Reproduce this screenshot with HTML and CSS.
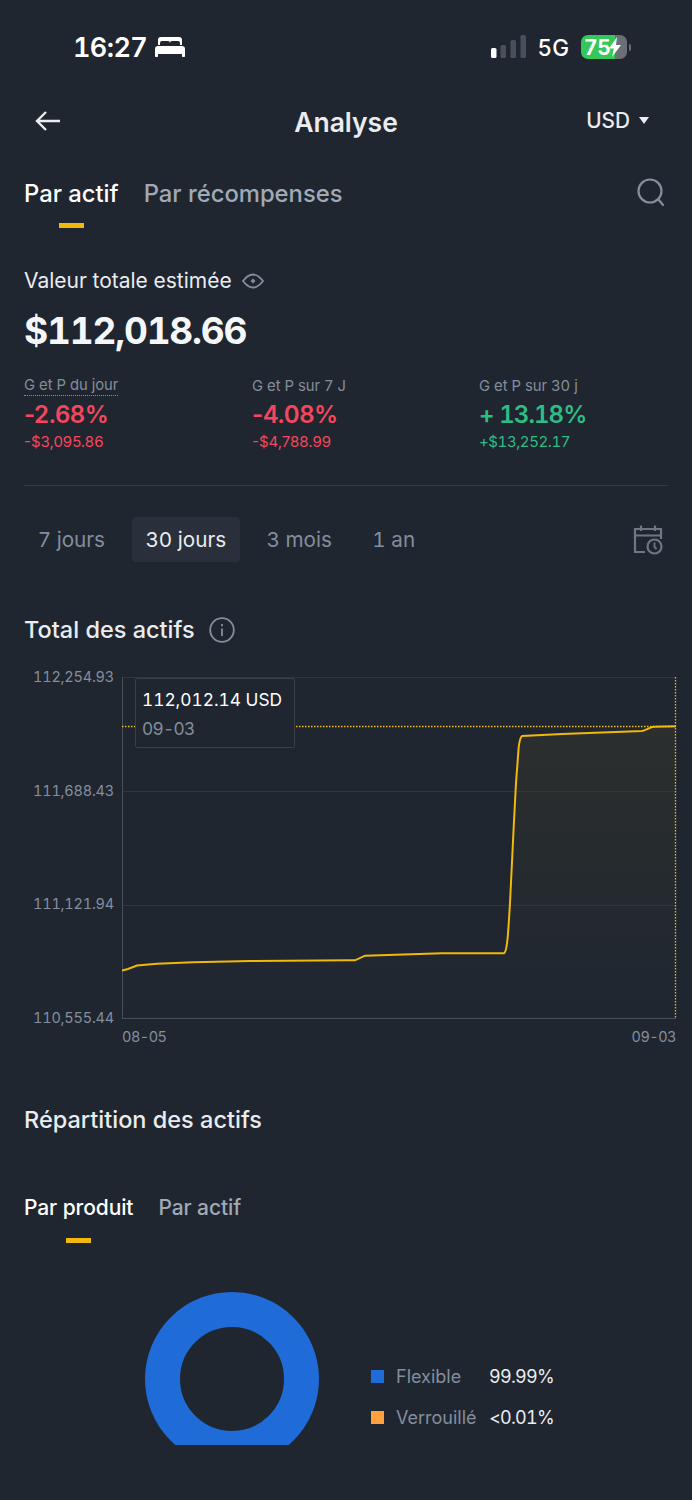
FILE: index.html
```html
<!DOCTYPE html>
<html lang="fr">
<head>
    <meta charset="UTF-8">
    <meta name="viewport" content="width=device-width, initial-scale=1.0">
    <title>Analyse</title>
    <link rel="stylesheet" href="styles.css">
</head>
<body>

    <!-- Status bar -->
    <div class="status-bar">
        <div class="status-left">
            <span class="clock">16:27</span>
            <svg class="bed" width="30" height="20" viewBox="0 0 30 20">
                <path fill="#fff" d="M3 8V3a3 3 0 0 1 3-3h18a3 3 0 0 1 3 3v5h-2V6a2 2 0 0 0-2-2h-6a2 2 0 0 0-2 2v2h-0V6a2 2 0 0 0-2-2H7a2 2 0 0 0-2 2v2z"/>
                <path fill="#fff" d="M3 9h24a3 3 0 0 1 3 3v5H0v-5a3 3 0 0 1 3-3zM0 17h3v2.200a.8.8 0 0 1-.8.8H.8a.8.8 0 0 1-.8-.8zM27 17h3v2.200a.8.8 0 0 1-.8.8h-1.400a.8.8 0 0 1-.8-.8z"/>
            </svg>
        </div>
        <div class="status-right">
            <svg width="35" height="24" viewBox="0 0 35 24">
                <rect x="0" y="13" width="5.500" height="10" rx="1.500" fill="#fff"/>
                <rect x="9.500" y="10" width="5.500" height="13" rx="1.500" fill="#4a505b"/>
                <rect x="19.500" y="5" width="5.500" height="18" rx="1.500" fill="#4a505b"/>
                <rect x="29.500" y="0" width="5.500" height="23" rx="1.500" fill="#4a505b"/>
            </svg>
            <span class="network">5G</span>
            <div class="battery">
                <span class="battery-level">75</span>
                <svg class="bolt" width="14" height="20" viewBox="0 0 14 20">
                    <path fill="#fff" d="M9 0 1 11.500h4.800L4 20l9-12H8z"/>
                </svg>
            </div>
            <div class="battery-nub"></div>
        </div>
    </div>

    <!-- Header -->
    <div class="header">
        <svg width="26" height="22" viewBox="0 0 26 22" fill="none" stroke="#eaecef" stroke-width="2.400">
            <path d="M25 11H2M11 2l-9 9 9 9"/>
        </svg>
        <h1>Analyse</h1>
        <div class="currency">USD <span class="caret"></span></div>
    </div>

    <!-- Main tabs -->
    <div class="main-tabs">
        <div class="tab active">Par actif<i></i></div>
        <div class="tab">Par récompenses<i></i></div>
        <svg class="search" width="30" height="30" viewBox="0 0 30 30" fill="none" stroke="#848e9c" stroke-width="2.200">
            <circle cx="14" cy="13" r="11.500"/>
            <path d="M22.500 21.500 27 27" stroke-linecap="round"/>
        </svg>
    </div>

    <!-- Totals -->
    <div class="totals">
        <div class="total-label">
            Valeur totale estimée
            <svg width="22" height="16" viewBox="0 0 22 16" fill="none" stroke="#848e9c" stroke-width="1.800">
                <path d="M1 8c3-4 6-6.500 10-6.500S18 4 21 8c-3 4-6 6.500-10 6.500S4 12 1 8z"/>
                <path d="M11 5.500 13.500 8 11 10.500 8.500 8z" fill="#848e9c" stroke="none"/>
            </svg>
        </div>
        <div class="total-value">$112,018.66</div>
    </div>

    <div class="stats">
        <div class="stat">
            <div class="stat-label dotted">G et P du jour</div>
            <div class="stat-pct red">-2.68%</div>
            <div class="stat-amount red">-$3,095.86</div>
        </div>
        <div class="stat">
            <div class="stat-label">G et P sur 7 J</div>
            <div class="stat-pct red">-4.08%</div>
            <div class="stat-amount red">-$4,788.99</div>
        </div>
        <div class="stat">
            <div class="stat-label">G et P sur 30 j</div>
            <div class="stat-pct green">+ 13.18%</div>
            <div class="stat-amount green">+$13,252.17</div>
        </div>
    </div>

    <div class="divider"></div>

    <!-- Period selector -->
    <div class="periods">
        <div class="period">7 jours</div>
        <div class="period selected">30 jours</div>
        <div class="period">3 mois</div>
        <div class="period">1 an</div>
        <svg class="calendar" width="30" height="30" viewBox="0 0 30 30" fill="none" stroke="#6f7785" stroke-width="2.200">
            <path d="M12 27H2V4h26v10M2 10.500h26M8 0.500V6M22 0.500V6"/>
            <circle cx="21.500" cy="21.500" r="7"/>
            <path d="M21.500 17.500v4.500l2 2" stroke-width="1.800"/>
        </svg>
    </div>

    <!-- Chart -->
    <div class="section-title">
        Total des actifs
        <svg width="26" height="26" viewBox="0 0 26 26" fill="none" stroke="#848e9c" stroke-width="1.800">
            <circle cx="13" cy="13" r="11.800"/>
            <path d="M13 11.500v7.500M13 7v2.200"/>
        </svg>
    </div>

    <div class="chart">
        <div class="y-axis">
            <span>112,254.93</span>
            <span>111,688.43</span>
            <span>111,121.94</span>
            <span>110,555.44</span>
        </div>
        <div class="plot">
            <svg width="556" height="343" viewBox="0 0 556 343" fill="none">
                <defs>
                    <linearGradient id="area" x1="0" y1="0" x2="0" y2="1">
                        <stop offset="0" stop-color="#f0b90b" stop-opacity="0.060"/>
                        <stop offset="1" stop-color="#f0b90b" stop-opacity="0"/>
                    </linearGradient>
                </defs>
                <path fill="url(#area)" d="M0 293.500 6 292 15 288.500 35 286.700 71 285.300 128 284 228 283.300 233 283.300 243 278.700 320 276.300 382 276.300C385 275 386 260 388 226L391.700 150 394 106 396.700 70C397.500 64 398.500 60 400 59L440 57 520 54C525 53 528 50 531.700 49.700L554 49.300V342H0z"/>
                <path stroke="#2f3642" d="M0 .5H554M0 114.500H554M0 228.500H554"/>
                <path stroke="#4a505b" d="M.5 0V342M0 341.500H554"/>
                <path stroke="#f0b90b" stroke-width="1.300" stroke-dasharray="1.500 1.500" d="M0 49.500H554M553.500 0V342"/>
                <path stroke="#f0b90b" stroke-width="2" d="M0 293.500 6 292 15 288.500 35 286.700 71 285.300 128 284 228 283.300 233 283.300 243 278.700 320 276.300 382 276.300C385 275 386 260 388 226L391.700 150 394 106 396.700 70C397.500 64 398.500 60 400 59L440 57 520 54C525 53 528 50 531.700 49.700L554 49.300"/>
            </svg>
            <div class="tooltip">
                <div class="tooltip-value">112,012.14 USD</div>
                <div class="tooltip-date">09-03</div>
            </div>
        </div>
    </div>
    <div class="x-axis">
        <span>08-05</span>
        <span>09-03</span>
    </div>

    <!-- Allocation -->
    <div class="section-title allocation-title">Répartition des actifs</div>

    <div class="sub-tabs">
        <div class="tab active">Par produit<i></i></div>
        <div class="tab">Par actif<i></i></div>
    </div>

    <div class="allocation">
        <svg class="donut" width="174" height="153" viewBox="0 0 174 153" fill="none">
            <circle cx="87" cy="87" r="69.500" stroke="#1f6bd8" stroke-width="35"/>
        </svg>
        <div class="legend">
            <div class="legend-row">
                <span class="swatch blue"></span>
                <span class="legend-name">Flexible</span>
                <span class="legend-value">99.99%</span>
            </div>
            <div class="legend-row">
                <span class="swatch orange"></span>
                <span class="legend-name">Verrouillé</span>
                <span class="legend-value">&lt;0.01%</span>
            </div>
        </div>
    </div>

</body>
</html>
```

FILE: styles.css
```css
body {
    font-family: Inter, "Liberation Sans", sans-serif;
    font-variant-numeric: tabular-nums;
    background-color: #1f2630;
    color: #eaecef;
    width: 692px;
    height: 1500px;
    margin: 0;
    overflow: hidden;
}

.red {
    color: #f6465d;
    font-variant-numeric: normal;
}

.green {
    color: #2ebd85;
}

/* Status bar */
.status-bar {
    display: flex;
    justify-content: space-between;
    height: 94px;
    padding: 0 61px 0 73px;
    box-sizing: border-box;
}

.status-left {
    display: flex;
    align-items: center;
    gap: 8px;
    height: 94px;
}

.clock {
    color: #fff;
    font-size: 27px;
    font-weight: 600;
    letter-spacing: -0.6px;
}

.status-right {
    display: flex;
    align-items: center;
    height: 94px;
}

.network {
    color: #fff;
    font-size: 22.500px;
    font-weight: 500;
    margin: 0 12px;
}

.battery {
    display: flex;
    align-items: center;
    width: 46px;
    height: 24px;
    border-radius: 7px;
    background: linear-gradient(90deg, #34c759 0 34px, #6b6e74 34px);
    overflow: hidden;
}

.battery-level {
    color: #fff;
    font-size: 21px;
    font-weight: 700;
    margin-left: 3px;
    letter-spacing: -0.4px;
}

.bolt {
    margin-left: -2px;
}

.battery-nub {
    width: 2px;
    height: 7px;
    margin-left: 2px;
    border-radius: 0 2px 2px 0;
    background-color: #6b6e74;
}

/* Header */
.header {
    position: relative;
    display: flex;
    justify-content: space-between;
    align-items: center;
    height: 54px;
    padding: 0 43px 0 35px;
}

.header h1 {
    position: absolute;
    left: 0;
    right: 0;
    margin: 2px 0 0;
    text-align: center;
    font-size: 26.500px;
    font-weight: 600;
}

.currency {
    display: flex;
    align-items: center;
    gap: 9px;
    font-size: 20.800px;
    font-weight: 500;
    margin-top: -2px;
}

.caret {
    width: 0;
    height: 0;
    border-left: 5.500px solid transparent;
    border-right: 5.500px solid transparent;
    border-top: 7px solid #eaecef;
}

/* Tabs */
.main-tabs,
.sub-tabs {
    display: flex;
    padding: 0 24px;
}

.main-tabs {
    gap: 25px;
    margin-top: 30px;
}

.sub-tabs {
    gap: 25px;
    margin-top: 56px;
}

.tab {
    display: flex;
    flex-direction: column;
    align-items: center;
    color: #a1a9b6;
    font-size: 23.800px;
    font-weight: 500;
    line-height: 32px;
}

.tab i {
    display: block;
    width: 25px;
    height: 5px;
    margin-top: 13px;
}

.tab.active {
    color: #fff;
}

.tab.active i {
    background-color: #f0b90b;
}

.search {
    margin: 0 2px 0 auto;
}

.sub-tabs .tab {
    font-size: 21px;
    line-height: 28px;
    letter-spacing: -0.1px;
}

.sub-tabs .tab i {
    margin-top: 16px;
}

/* Totals */
.totals {
    padding: 0 24px;
    margin-top: 38px;
}

.total-label {
    display: flex;
    align-items: center;
    gap: 10px;
    font-size: 21px;
    line-height: 30px;
}

.total-value {
    margin-top: 13px;
    font-size: 37px;
    font-weight: 700;
    line-height: 44px;
    letter-spacing: -1.2px;
    color: #f5f6f7;
}

.stats {
    display: grid;
    grid-template-columns: 228px 227px 1fr;
    padding: 0 24px;
    margin-top: 23px;
}

.stat-label {
    width: max-content;
    color: #848e9c;
    font-size: 14.800px;
    line-height: 20px;
}

.stat-label.dotted {
    border-bottom: 1px dotted #848e9c;
    line-height: 19px;
}

.stat-pct {
    font-size: 24px;
    font-weight: 600;
    line-height: 30px;
    margin-top: 4px;
}

.stat-pct.red {
    letter-spacing: -0.5px;
}

.stat-pct.green {
    letter-spacing: -0.9px;
}

.stat-amount {
    font-size: 15px;
    line-height: 20px;
    margin-top: 2px;
}

.stat-amount.green {
    letter-spacing: -0.4px;
}

.divider {
    height: 1px;
    margin: 33px 24px 0;
    background-color: #343b47;
}

/* Period selector */
.periods {
    display: flex;
    align-items: center;
    gap: 13px;
    height: 45px;
    margin-top: 31px;
    padding: 0 24px;
}

.period {
    padding: 0 13.700px;
    line-height: 45px;
    color: #848e9c;
    font-size: 20.700px;
}

.period.selected {
    color: #eaecef;
    background-color: #29303c;
    border-radius: 4px;
}

.calendar {
    margin: 0 5px 0 auto;
}

/* Chart */
.section-title {
    display: flex;
    align-items: center;
    gap: 14px;
    padding: 0 24px;
    margin-top: 50px;
    font-size: 23.500px;
    font-weight: 500;
    line-height: 36px;
}

.chart {
    display: flex;
    height: 361px;
    margin-top: 18px;
}

.y-axis {
    display: flex;
    flex-direction: column;
    justify-content: space-between;
    align-items: flex-end;
    width: 114px;
    margin: 1px 8px -1px 0;
    color: #848e9c;
    font-size: 14.500px;
    line-height: 20px;
    letter-spacing: -0.2px;
}

.plot {
    position: relative;
    margin-top: 11px;
    height: 343px;
}

.plot svg {
    display: block;
}

.tooltip {
    position: absolute;
    left: 13px;
    top: 1px;
    width: 160px;
    height: 70px;
    padding: 9px 6px;
    box-sizing: border-box;
    background-color: #1f2630;
    border: 1px solid #383f4b;
    border-radius: 2px;
    font-size: 17.300px;
    line-height: 29px;
}

.tooltip-value {
    color: #fff;
    white-space: nowrap;
    line-height: 24px;
}

.tooltip-date {
    color: #848e9c;
    line-height: 34px;
    letter-spacing: -0.7px;
}

.x-axis {
    display: flex;
    justify-content: space-between;
    width: 554px;
    margin: 0 0 0 122px;
    color: #848e9c;
    font-size: 14.500px;
    line-height: 20px;
    letter-spacing: -0.5px;
}

/* Allocation */
.allocation-title {
    margin-top: 55px;
}

.allocation {
    display: flex;
    align-items: flex-start;
    margin-top: 49px;
    padding-left: 145px;
}

.donut {
    display: block;
}

.legend {
    display: flex;
    flex-direction: column;
    gap: 13px;
    margin: 70px 0 0 52px;
}

.legend-row {
    display: flex;
    align-items: center;
    height: 28px;
    font-size: 18px;
}

.swatch {
    width: 13px;
    height: 13px;
    margin-right: 12px;
}

.swatch.blue {
    background-color: #1f6bd8;
}

.swatch.orange {
    background-color: #ffa23e;
}

.legend-name {
    width: 93px;
    color: #848e9c;
}

.legend-value {
    color: #eaecef;
    letter-spacing: -0.7px;
}
```
